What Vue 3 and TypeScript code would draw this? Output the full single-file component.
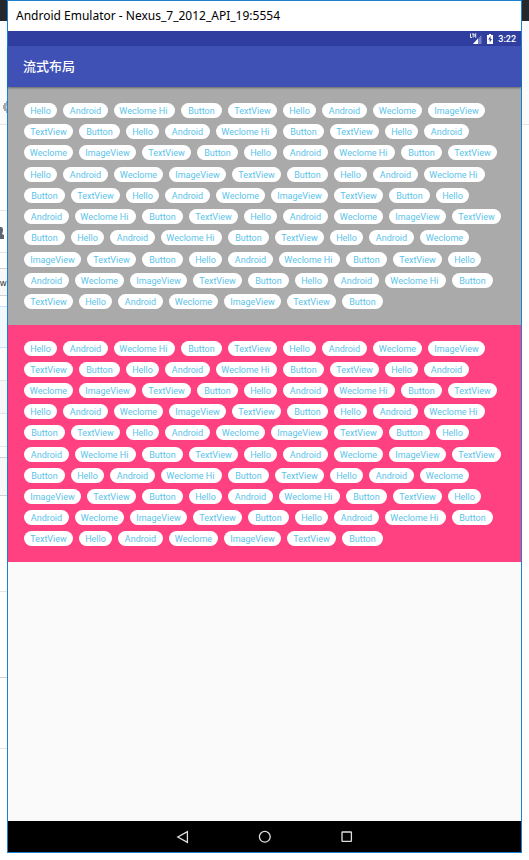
<script setup lang="ts">
interface Strip {
  size: number
  tone: string
  glyph?: 'gear' | 'person'
  text?: string
}

// The trailing space of "Weclome Hi " is part of the label.
const words: string[] = [
  'Hello', 'Android', 'Weclome Hi ', 'Button', 'TextView', 'Hello',
  'Android', 'Weclome', 'ImageView', 'TextView', 'Button',
]
const widths: Record<string, number> = {
  'Hello': 33,
  'Android': 45,
  'Weclome Hi ': 61,
  'Button': 41,
  'TextView': 49,
  'Weclome': 49,
  'ImageView': 57,
}
const tags: string[] = Array.from({ length: 8 }, () => words).flat()
const panels: string[] = ['grey', 'pink']

// Slices of the page that lies behind the emulator window.
const leftStrips: Strip[] = [
  { size: 21, tone: 'dark' },
  { size: 104, tone: 'pale', glyph: 'gear' },
  { size: 86, tone: 'white' },
  { size: 42, tone: 'white', glyph: 'person' },
  { size: 16, tone: 'white strong' },
  { size: 27, tone: 'field strong', text: 'w' },
  { size: 11, tone: 'white blue-line' },
  { size: 41, tone: 'blue blue-line' },
  { size: 33, tone: 'white' },
  { size: 33, tone: 'soft' },
  { size: 33, tone: 'white' },
  { size: 11, tone: 'white strong' },
  { size: 38, tone: 'soft strong' },
  { size: 96, tone: 'white' },
  { size: 86, tone: 'white strong' },
  { size: 71, tone: 'white' },
]
const rightStrips: Strip[] = [
  { size: 21, tone: 'dark' },
  { size: 104, tone: 'pale' },
]
</script>

<template>
  <div class="desktop">
    <div class="gutter" aria-hidden="true">
      <div v-for="(s, i) in leftStrips" :key="i" class="strip" :class="s.tone" :style="{ height: s.size + 'px' }">
        <svg v-if="s.glyph === 'gear'" class="gear" width="4" height="12" viewBox="0 0 4 12">
          <path d="M4 0v12H3v-2H1V8H0V4h1V2h2V0z" fill="#a9a9a9" />
          <path d="M4 4.5H3v3h1z" fill="#d5d6d7" />
        </svg>
        <svg v-if="s.glyph === 'person'" class="person" width="5" height="12" viewBox="0 0 5 12">
          <path d="M0 0h1q2 0 2 3 0 2-1 4l2 1v4H0z" fill="#5b6470" />
        </svg>
        <span v-if="s.text" class="letter">{{ s.text }}</span>
      </div>
    </div>

    <main class="window">
      <header class="titlebar">Android Emulator - Nexus_7_2012_API_19:5554</header>

      <div class="status">
        <svg width="12" height="11" viewBox="0 0 12 11" aria-label="LTE signal">
          <path d="M11.5 2v9H3z" fill="#7780c2" />
          <path d="M8 5.5V11H3z" fill="#fff" />
          <path d="M.5 .5v4H2M2 1h2.4M3.2 1v3.5M6.4 1H5v3h1.4M5 2.5h1.2" fill="none" stroke="#fff" stroke-width=".9" />
        </svg>
        <svg class="battery" width="6" height="10" viewBox="0 0 6 10" aria-label="Battery charging">
          <path d="M2 0h2v1h2v9H0V1h2z" fill="#fff" />
          <path d="M3.6 2 1.2 5.6h1.5V8.5L5 4.9H3.6z" fill="#303f9f" />
        </svg>
        <span>3:22</span>
      </div>

      <h1 class="toolbar">流式布局</h1>

      <section v-for="p in panels" :key="p" class="panel" :class="p">
        <span v-for="(t, i) in tags" :key="i" class="tag" :style="{ minWidth: widths[t] + 'px' }">{{ t }}</span>
      </section>

      <nav class="navbar">
        <button type="button" aria-label="Back">
          <svg width="14" height="14" viewBox="0 0 14 14"><path d="M11.4 1.6v10.8L1.8 7z" /></svg>
        </button>
        <button type="button" aria-label="Home">
          <svg width="14" height="14" viewBox="0 0 14 14"><circle cx="6.8" cy="6.8" r="5.4" /></svg>
        </button>
        <button type="button" aria-label="Overview">
          <svg width="14" height="14" viewBox="0 0 14 14"><rect x="2" y="2" width="9.4" height="9.4" rx=".5" /></svg>
        </button>
      </nav>
    </main>

    <div class="gutter" aria-hidden="true">
      <div v-for="(s, i) in rightStrips" :key="i" class="strip" :class="s.tone" :style="{ height: s.size + 'px' }"></div>
    </div>
  </div>
</template>

<style>
body {
  margin: 0;
  background: #fff;
}
</style>

<style scoped>
.desktop {
  display: flex;
  min-height: 100vh;
  font-family: Roboto, "Noto Sans CJK SC", sans-serif;
}
.gutter {
  flex: 0 0 7px;
  overflow: hidden;
}
.strip {
  position: relative;
  box-sizing: border-box;
  border-bottom: 1px solid #e4e5e8;
  background: #fff;
}
.dark { background: #24292e; border-color: #24292e; }
.pale { background: #fafbfc; }
.field { background: #f7f8f9; }
.blue { background: #f1f8ff; }
.soft { background: #f6f8fa; }
.strong { border-color: #cfd1d4; }
.blue-line { border-color: #c8e1ff; }
.gear {
  position: absolute;
  left: 3px;
  top: 80px;
}
.person {
  position: absolute;
  left: 0;
  top: 16px;
}
.letter {
  position: absolute;
  left: 0;
  top: 6px;
  font: 9px/16px "Liberation Sans", sans-serif;
  color: #24292e;
}
.window {
  flex: 1;
  min-width: 0;
  display: flex;
  flex-direction: column;
  margin-bottom: 7px;
  border: 1px solid #1a80cf;
  background: #fafafa;
}
.titlebar {
  padding-left: 8px;
  background: #fff;
  color: #000;
  font: 12px/30px "Noto Sans", sans-serif;
  white-space: nowrap;
}
.status {
  display: flex;
  align-items: center;
  justify-content: flex-end;
  height: 15px;
  padding-right: 5px;
  background: #303f9f;
  color: #fff;
  font-size: 9px;
  font-weight: 500;
}
.battery {
  margin: 0 5px;
}
.toolbar {
  position: relative;
  margin: 0;
  padding-left: 15px;
  background: #3f51b5;
  box-shadow: 0 1px 2px rgba(0, 0, 0, 0.4);
  color: #fff;
  font-size: 13px;
  font-weight: 500;
  line-height: 41px;
}
.panel {
  display: flex;
  flex-wrap: wrap;
  align-content: space-between;
  column-gap: 6px;
  box-sizing: border-box;
  min-height: 237px;
  padding: 16px;
}
.grey { background: #aaa; min-height: 238px; }
.pink { background: #ff4081; }
.tag {
  box-sizing: border-box;
  padding: 1px 5px 0;
  border-radius: 8px;
  background: #fff;
  color: #5bc3ea;
  font-size: 9px;
  line-height: 14px;
  text-align: center;
  white-space: pre;
}
.navbar {
  display: flex;
  justify-content: center;
  gap: 50px;
  margin-top: auto;
  background: #000;
}
.navbar button {
  display: flex;
  align-items: center;
  justify-content: center;
  width: 32px;
  height: 31px;
  padding: 0;
  border: 0;
  background: none;
}
.navbar svg {
  fill: none;
  stroke: #e0e0e0;
  stroke-width: 1.3;
}
</style>
